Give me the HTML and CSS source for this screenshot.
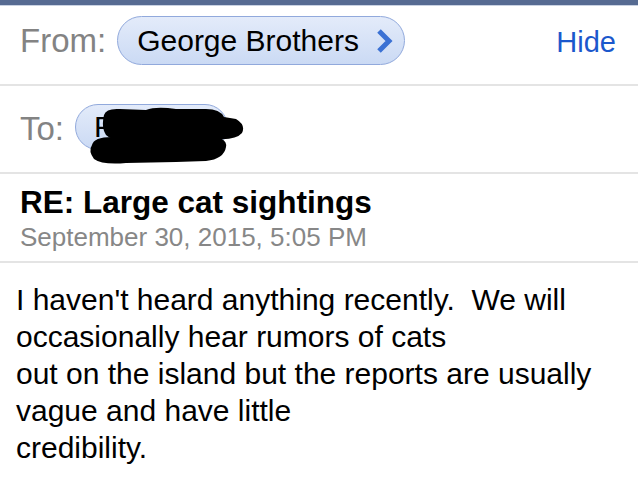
FILE: index.html
```html
<!DOCTYPE html>
<html>
<head>
<meta charset="utf-8">
<link rel="stylesheet" href="styles.css">
</head>
<body>
<div class="topbar"></div>
<div class="row from-row">
  <span class="label">From:</span>
  <span class="pill sender">George Brothers
    <svg class="chev" width="18" height="26" viewBox="0 0 18 26"><path d="M4 3 L14 13 L4 23" fill="none" stroke="#3b71d4" stroke-width="5" stroke-linecap="butt" stroke-linejoin="miter"/></svg>
  </span>
  <span class="spacer"></span>
  <span class="hide">Hide</span>
</div>
<div class="sep"></div>
<div class="row to-row">
  <span class="label">To:</span>
  <span class="pill recipient">F</span>
  <svg class="redact" width="160" height="60" viewBox="0 0 160 60">
    <path d="M18 8 Q20 1 34 2 L60 3 Q70 -1 90 2 L120 2 Q134 2 138 10 L150 12 Q160 18 156 26 Q150 33 132 32 L40 33 Q26 34 20 28 Q15 20 18 8 Z" fill="#000"/>
    <path d="M6 38 Q8 29 30 30 L120 28 Q142 30 140 40 Q138 52 120 54 L90 55 L40 56 Q16 58 8 52 Q2 44 6 38 Z" fill="#000"/>
  </svg>
</div>
<div class="sep"></div>
<div class="subject-block">
  <div class="subject">RE: Large cat sightings</div>
  <div class="date">September 30, 2015, 5:05 PM</div>
</div>
<div class="sep"></div>
<div class="body-text">
I haven't heard anything recently.&nbsp; We will<br>
occasionally hear rumors of cats<br>
out on the island but the reports are usually<br>
vague and have little<br>
credibility.
</div>
</body>
</html>
```

FILE: styles.css
```css
html, body {
  margin: 0;
  padding: 0;
  background: #ffffff;
}
body {
  font-family: "Liberation Sans", Arial, sans-serif;
  color: #000;
  width: 638px;
  height: 504px;
  overflow: hidden;
}
.topbar {
  height: 5px;
  background: #566b92;
  border-bottom: 1px solid #c9d2e2;
}
.row {
  display: flex;
  align-items: center;
  padding-left: 20px;
  position: relative;
}
.from-row {
  height: 78px;
  padding-right: 22px;
  align-items: flex-start;
  padding-top: 10px;
  box-sizing: border-box;
}
.to-row {
  height: 86px;
  box-sizing: border-box;
  align-items: flex-start;
  padding-top: 18px;
}
.label {
  font-size: 33px;
  color: #838383;
  line-height: 49px;
  margin-right: 11px;
}
.pill {
  display: inline-flex;
  align-items: center;
  box-sizing: border-box;
  height: 49px;
  border-radius: 25px;
  border: 1px solid #91a9dc;
  background: linear-gradient(#e3ebfa, #cbdaf4);
  font-size: 30px;
  color: #000;
}
.sender {
  width: 288px;
  padding-left: 19px;
}
.chev {
  margin-left: 16px;
}
.recipient {
  width: 153px;
  height: 46px;
  padding-left: 18px;
}
.spacer {
  flex: 1;
}
.hide {
  font-size: 29px;
  color: #1b58cc;
  line-height: 49px;
  margin-top: 2px;
}
.redact {
  position: absolute;
  left: 86px;
  top: 21px;
}
.sep {
  height: 2px;
  background: #e4e4e4;
}
.subject-block {
  height: 87px;
  padding-left: 20px;
  padding-top: 10px;
  box-sizing: border-box;
}
.subject {
  font-size: 31.5px;
  font-weight: bold;
  line-height: 36px;
}
.date {
  font-size: 26px;
  color: #878787;
  line-height: 34px;
}
.body-text {
  padding-left: 16px;
  padding-top: 18px;
  font-size: 30px;
  line-height: 37px;
}
```
